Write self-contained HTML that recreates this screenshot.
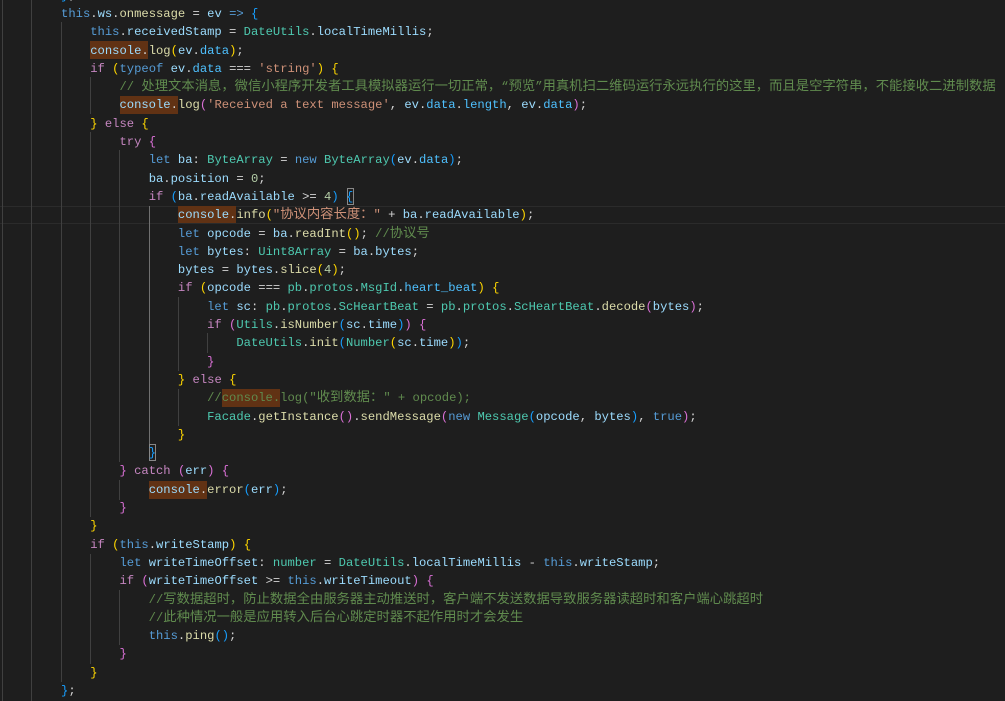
<!DOCTYPE html>
<html><head><meta charset="utf-8">
<style>
html,body{margin:0;padding:0;background:#1e1e1e;width:1005px;height:701px;overflow:hidden}
#a{position:absolute;left:0;top:0;width:1005px;height:701px;overflow:hidden;background:#1e1e1e}
.gd{position:absolute;width:1px;background:#404040}
.hl{position:absolute;left:0;width:1005px;height:16px;top:206px;border-top:1px solid #2b2b2b;border-bottom:1px solid #2b2b2b}
.fd{position:absolute;height:18px;width:58.4px;background:#613214}
.mb{position:absolute;box-sizing:border-box;border:1px solid #888;width:7px;height:17px}
pre{position:absolute;left:2.6px;top:-13.3px;margin:0;font:12.18px/18.3px "Liberation Mono","Noto Sans CJK SC",monospace;color:#d4d4d4;white-space:pre}
pre div{height:18.3px}
i{font-style:normal;font-family:"Noto Sans CJK SC","WenQuanYi Zen Hei",sans-serif;font-size:13.33px;line-height:0}
.k{color:#c586c0}.b{color:#569cd6}.v{color:#9cdcfe}.t{color:#4ec9b0}.f{color:#dcdcaa}.s{color:#ce9178}.c{color:#608b4e}.n{color:#b5cea8}.o{color:#4fc1ff}.g{color:#ffd700}.p{color:#da70d6}.u{color:#179fff}
</style></head><body><div id="a">
<div class="hl"></div>
<div class="gd" style="left:2px;top:0;height:701px"></div>
<div class="gd" style="left:31px;top:0;height:701px"></div>
<div class="gd" style="left:61px;top:22px;height:660px"></div>
<div class="gd" style="left:90px;top:77px;height:37px"></div>
<div class="gd" style="left:90px;top:132px;height:385px"></div>
<div class="gd" style="left:90px;top:554px;height:110px"></div>
<div class="gd" style="left:119px;top:150px;height:312px"></div>
<div class="gd" style="left:119px;top:480px;height:20px"></div>
<div class="gd" style="left:119px;top:590px;height:55px"></div>
<div class="gd" style="left:149px;top:206px;height:238px;background:#707070"></div>
<div class="gd" style="left:178px;top:297px;height:74px"></div>
<div class="gd" style="left:178px;top:389px;height:37px"></div>
<div class="gd" style="left:207px;top:333px;height:20px"></div>
<div class="fd" style="left:90px;top:41px"></div>
<div class="fd" style="left:119.7px;top:96px"></div>
<div class="fd" style="left:178px;top:206px;height:17px"></div>
<div class="fd" style="left:222px;top:389px"></div>
<div class="fd" style="left:149px;top:481px"></div>
<div class="mb" style="left:347px;top:188px"></div>
<div class="mb" style="left:149px;top:444px"></div>
<pre><div>        <span class="u">}</span>;</div><div>        <span class="b">this</span>.<span class="v">ws</span>.<span class="f">onmessage</span> = <span class="v">ev</span> <span class="b">=&gt;</span> <span class="u">{</span></div><div>            <span class="b">this</span>.<span class="v">receivedStamp</span> = <span class="t">DateUtils</span>.<span class="v">localTimeMillis</span>;</div><div>            <span class="v">console</span>.<span class="f">log</span><span class="g">(</span><span class="v">ev</span>.<span class="o">data</span><span class="g">)</span>;</div><div>            <span class="k">if</span> <span class="g">(</span><span class="b">typeof</span> <span class="v">ev</span>.<span class="o">data</span> === <span class="s">'string'</span><span class="g">)</span> <span class="g">{</span></div><div class="c">                // <i>处理文本消息，微信小程序开发者工具模拟器运行一切正常，</i>“<i>预览</i>”<i>用真机扫二维码运行永远执行的这里，而且是空字符串，不能接收二进制数据</i></div><div>                <span class="v">console</span>.<span class="f">log</span><span class="p">(</span><span class="s">'Received a text message'</span>, <span class="v">ev</span>.<span class="o">data</span>.<span class="o">length</span>, <span class="v">ev</span>.<span class="o">data</span><span class="p">)</span>;</div><div>            <span class="g">}</span> <span class="k">else</span> <span class="g">{</span></div><div>                <span class="k">try</span> <span class="p">{</span></div><div>                    <span class="b">let</span> <span class="v">ba</span>: <span class="t">ByteArray</span> = <span class="b">new</span> <span class="t">ByteArray</span><span class="u">(</span><span class="v">ev</span>.<span class="o">data</span><span class="u">)</span>;</div><div>                    <span class="v">ba</span>.<span class="v">position</span> = <span class="n">0</span>;</div><div>                    <span class="k">if</span> <span class="u">(</span><span class="v">ba</span>.<span class="v">readAvailable</span> &gt;= <span class="n">4</span><span class="u">)</span> <span class="u">{</span></div><div>                        <span class="v">console</span>.<span class="f">info</span><span class="g">(</span><span class="s">"<i>协议内容长度：</i>"</span> + <span class="v">ba</span>.<span class="v">readAvailable</span><span class="g">)</span>;</div><div>                        <span class="b">let</span> <span class="v">opcode</span> = <span class="v">ba</span>.<span class="f">readInt</span><span class="g">()</span>; <span class="c">//<i>协议号</i></span></div><div>                        <span class="b">let</span> <span class="v">bytes</span>: <span class="t">Uint8Array</span> = <span class="v">ba</span>.<span class="v">bytes</span>;</div><div>                        <span class="v">bytes</span> = <span class="v">bytes</span>.<span class="f">slice</span><span class="g">(</span><span class="n">4</span><span class="g">)</span>;</div><div>                        <span class="k">if</span> <span class="g">(</span><span class="v">opcode</span> === <span class="t">pb</span>.<span class="t">protos</span>.<span class="t">MsgId</span>.<span class="o">heart_beat</span><span class="g">)</span> <span class="g">{</span></div><div>                            <span class="b">let</span> <span class="v">sc</span>: <span class="t">pb</span>.<span class="t">protos</span>.<span class="t">ScHeartBeat</span> = <span class="t">pb</span>.<span class="t">protos</span>.<span class="t">ScHeartBeat</span>.<span class="f">decode</span><span class="p">(</span><span class="v">bytes</span><span class="p">)</span>;</div><div>                            <span class="k">if</span> <span class="p">(</span><span class="t">Utils</span>.<span class="f">isNumber</span><span class="u">(</span><span class="v">sc</span>.<span class="v">time</span><span class="u">)</span><span class="p">)</span> <span class="p">{</span></div><div>                                <span class="t">DateUtils</span>.<span class="f">init</span><span class="u">(</span><span class="t">Number</span><span class="g">(</span><span class="v">sc</span>.<span class="v">time</span><span class="g">)</span><span class="u">)</span>;</div><div>                            <span class="p">}</span></div><div>                        <span class="g">}</span> <span class="k">else</span> <span class="g">{</span></div><div class="c">                            //console.log("<i>收到数据：</i>" + opcode);</div><div>                            <span class="t">Facade</span>.<span class="f">getInstance</span><span class="p">()</span>.<span class="f">sendMessage</span><span class="p">(</span><span class="b">new</span> <span class="t">Message</span><span class="u">(</span><span class="v">opcode</span>, <span class="v">bytes</span><span class="u">)</span>, <span class="b">true</span><span class="p">)</span>;</div><div>                        <span class="g">}</span></div><div>                    <span class="u">}</span></div><div>                <span class="p">}</span> <span class="k">catch</span> <span class="p">(</span><span class="v">err</span><span class="p">)</span> <span class="p">{</span></div><div>                    <span class="v">console</span>.<span class="f">error</span><span class="u">(</span><span class="v">err</span><span class="u">)</span>;</div><div>                <span class="p">}</span></div><div>            <span class="g">}</span></div><div>            <span class="k">if</span> <span class="g">(</span><span class="b">this</span>.<span class="v">writeStamp</span><span class="g">)</span> <span class="g">{</span></div><div>                <span class="b">let</span> <span class="v">writeTimeOffset</span>: <span class="t">number</span> = <span class="t">DateUtils</span>.<span class="v">localTimeMillis</span> - <span class="b">this</span>.<span class="v">writeStamp</span>;</div><div>                <span class="k">if</span> <span class="p">(</span><span class="v">writeTimeOffset</span> &gt;= <span class="b">this</span>.<span class="v">writeTimeout</span><span class="p">)</span> <span class="p">{</span></div><div class="c">                    //<i>写数据超时，防止数据全由服务器主动推送时，客户端不发送数据导致服务器读超时和客户端心跳超时</i></div><div class="c">                    //<i>此种情况一般是应用转入后台心跳定时器不起作用时才会发生</i></div><div>                    <span class="b">this</span>.<span class="f">ping</span><span class="u">()</span>;</div><div>                <span class="p">}</span></div><div>            <span class="g">}</span></div><div>        <span class="u">}</span>;</div></pre>
</div></body></html>
